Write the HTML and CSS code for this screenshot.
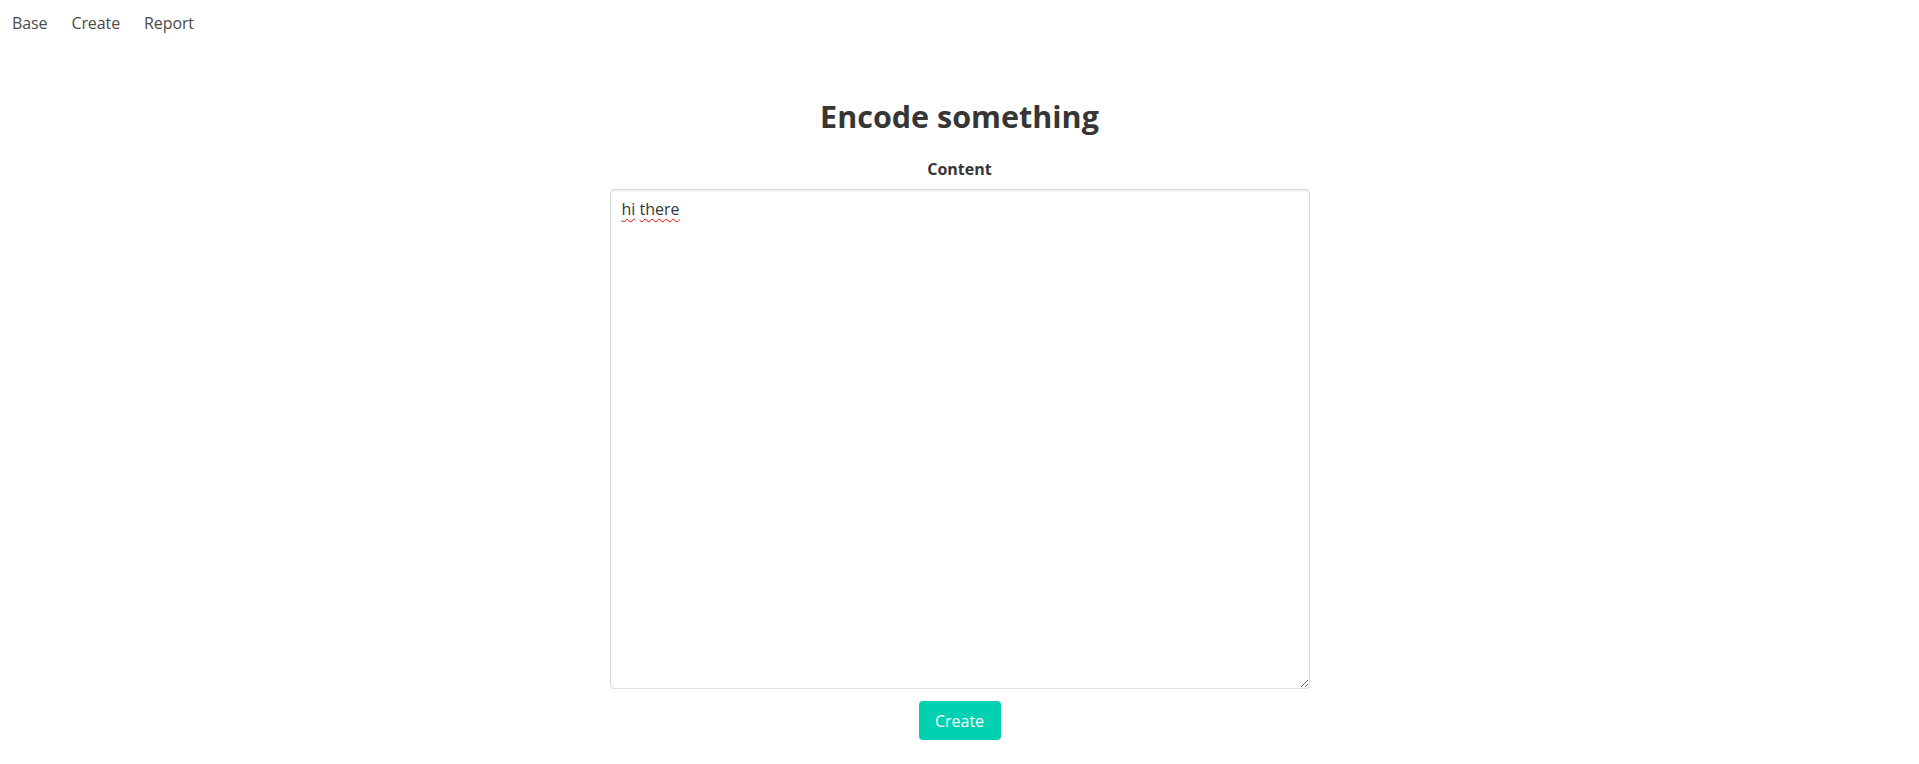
FILE: index.html
```html
<!DOCTYPE html>
<html lang="en">
<head>
<meta charset="utf-8">
<title>Encode something</title>
<link rel="stylesheet" href="styles.css">
</head>
<body>
<nav class="navbar">
  <a class="nav-item" href="#">Base</a>
  <a class="nav-item" href="#">Create</a>
  <a class="nav-item" href="#">Report</a>
</nav>
<main class="section">
  <h1 class="title">Encode something</h1>
  <form class="form">
    <label class="label" for="content">Content</label>
    <div class="control">
      <textarea id="content" class="textarea" spellcheck="false">hi there</textarea>
      <div class="spell" aria-hidden="true"><span class="misspelled">hi</span> <span class="misspelled">there</span></div>
    </div>
    <button type="button" class="button">Create</button>
  </form>
</main>
</body>
</html>
```
FILE: styles.css
```css
html, body {
  margin: 0;
  padding: 0;
  background: #fff;
}
body {
  font-family: "Open Sans", "Noto Sans", "Liberation Sans", sans-serif;
  font-size: 16px;
  line-height: 1.5;
  color: #4a4a4a;
}
.navbar {
  display: flex;
  align-items: center;
  height: 46px;
  padding: 0;
}
.nav-item {
  color: #4a4a4a;
  text-decoration: none;
  padding: 0 12px;
  line-height: 24px;
  letter-spacing: -0.1px;
}
.section {
  display: flex;
  flex-direction: column;
  align-items: center;
  padding-top: 52px;
}
.title {
  margin: 0 0 23px;
  font-size: 30.5px;
  line-height: 36px;
  font-weight: 700;
  color: #363636;
}
.form {
  display: flex;
  flex-direction: column;
  align-items: center;
}
.label {
  font-weight: 700;
  color: #363636;
  font-size: 16px;
  line-height: 24px;
  margin-bottom: 8px;
}
.control {
  position: relative;
  width: 700px;
  height: 500px;
  margin-bottom: 12px;
}
.textarea {
  box-sizing: border-box;
  display: block;
  width: 100%;
  height: 100%;
  margin: 0;
  padding: 7px 11px 11px;
  border: 1px solid #dbdbdb;
  border-radius: 4px;
  box-shadow: inset 0 1px 2px rgba(10, 10, 10, 0.1);
  font-family: inherit;
  font-size: 16px;
  line-height: 24px;
  color: #363636;
  background: #fff;
  resize: vertical;
  outline: none;
}
.spell {
  position: absolute;
  left: 12px;
  top: 8px;
  font-size: 16px;
  line-height: 24px;
  color: transparent;
  pointer-events: none;
}
.misspelled {
  text-decoration: underline wavy #e00;
  text-decoration-thickness: 1px;
  text-underline-offset: 3px;
}
.button {
  box-sizing: border-box;
  width: 82px;
  height: 39px;
  padding: 0;
  border: 1px solid transparent;
  border-radius: 4px;
  background: #00d1b2;
  color: #fff;
  font-family: inherit;
  font-size: 16px;
  line-height: 24px;
  cursor: pointer;
}
```
